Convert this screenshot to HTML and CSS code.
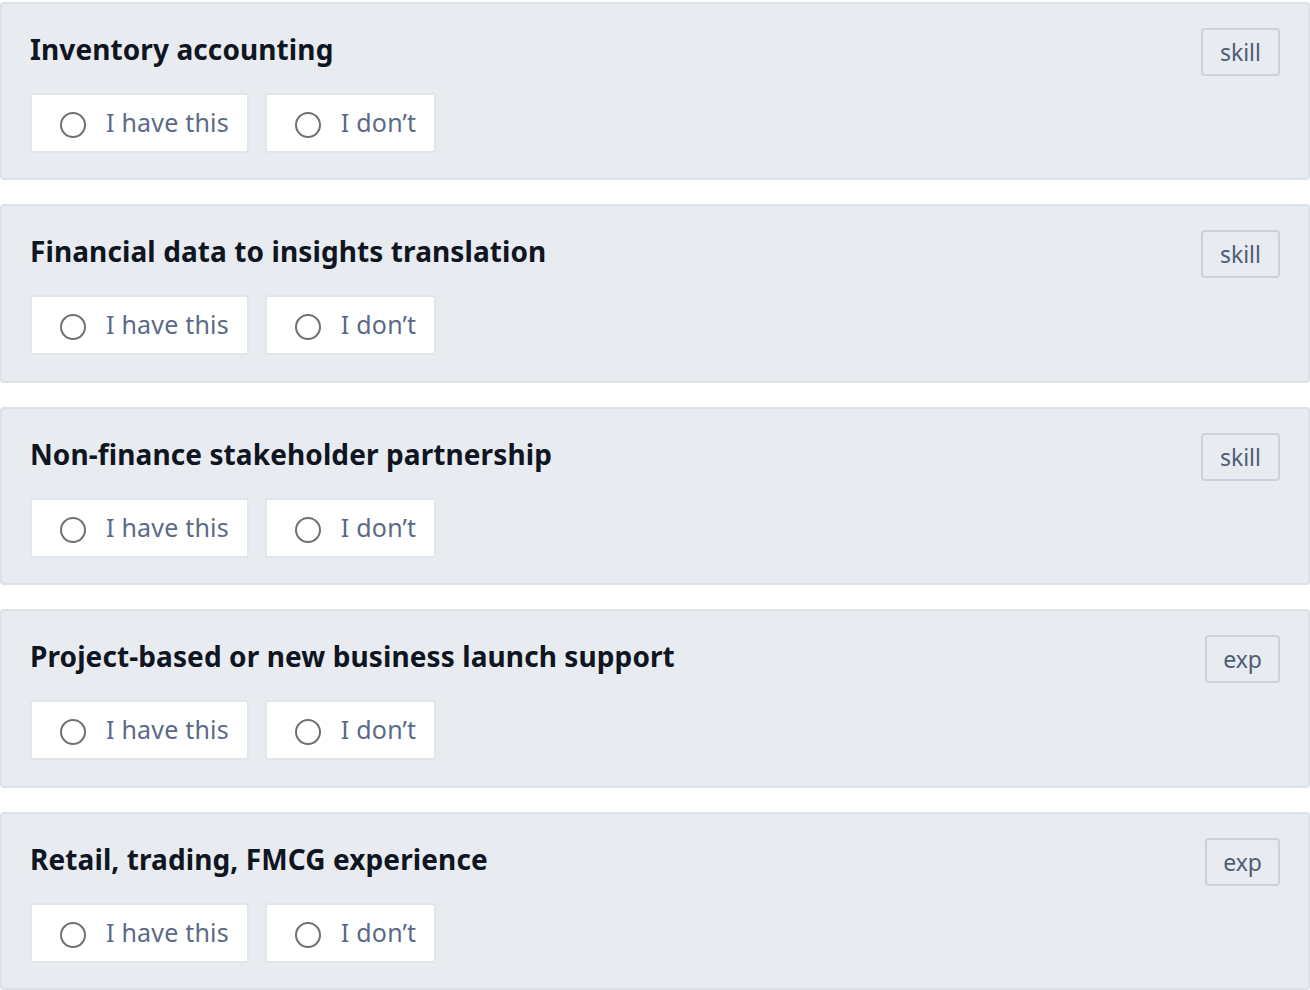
FILE: index.html
```html
<!DOCTYPE html>
<html>
<head>
<meta charset="utf-8">
<link rel="stylesheet" href="styles.css">
</head>
<body>
<div class="list">
  <div class="card">
    <div class="main">
      <h2 class="title">Inventory accounting</h2>
      <div class="options">
        <label class="opt"><span class="radio"></span><span class="label">I have this</span></label>
        <label class="opt"><span class="radio"></span><span class="label">I don’t</span></label>
      </div>
    </div>
    <span class="badge">skill</span>
  </div>
  <div class="card">
    <div class="main">
      <h2 class="title">Financial data to insights translation</h2>
      <div class="options">
        <label class="opt"><span class="radio"></span><span class="label">I have this</span></label>
        <label class="opt"><span class="radio"></span><span class="label">I don’t</span></label>
      </div>
    </div>
    <span class="badge">skill</span>
  </div>
  <div class="card">
    <div class="main">
      <h2 class="title">Non-finance stakeholder partnership</h2>
      <div class="options">
        <label class="opt"><span class="radio"></span><span class="label">I have this</span></label>
        <label class="opt"><span class="radio"></span><span class="label">I don’t</span></label>
      </div>
    </div>
    <span class="badge">skill</span>
  </div>
  <div class="card">
    <div class="main">
      <h2 class="title">Project-based or new business launch support</h2>
      <div class="options">
        <label class="opt"><span class="radio"></span><span class="label">I have this</span></label>
        <label class="opt"><span class="radio"></span><span class="label">I don’t</span></label>
      </div>
    </div>
    <span class="badge badge-exp">exp</span>
  </div>
  <div class="card">
    <div class="main">
      <h2 class="title">Retail, trading, FMCG experience</h2>
      <div class="options">
        <label class="opt"><span class="radio"></span><span class="label">I have this</span></label>
        <label class="opt"><span class="radio"></span><span class="label">I don’t</span></label>
      </div>
    </div>
    <span class="badge badge-exp">exp</span>
  </div>
</div>
</body>
</html>
```

FILE: styles.css
```css
html, body {
  margin: 0;
  padding: 0;
  background: #ffffff;
}
body {
  font-family: "Noto Sans", "Open Sans", sans-serif;
}
.list {
  display: flex;
  flex-direction: column;
  gap: 24px;
  padding-top: 2px;
}
.card {
  display: flex;
  justify-content: space-between;
  align-items: flex-start;
  background: #e8ebf0;
  border: 2px solid #dde1e8;
  border-radius: 4px;
  padding: 24px 28px 25.4px 28px;
}
.main {
  display: flex;
  flex-direction: column;
}
.title {
  margin: 0;
  padding-top: 1px;
  font-size: 28px;
  line-height: 41px;
  font-weight: 700;
  color: #0f1521;
  letter-spacing: 0.1px;
}
.options {
  display: flex;
  gap: 16px;
  margin-top: 23px;
}
.opt {
  display: flex;
  align-items: center;
  height: 56px;
  background: #ffffff;
  border: 2px solid #e2e5ea;
  border-radius: 3px;
  padding: 0 18px 0 28px;
  box-sizing: content-box;
}
.radio {
  width: 22px;
  height: 22px;
  border: 2px solid #707070;
  border-radius: 50%;
  margin-top: 4px;
  margin-right: 20px;
  flex: none;
}
.label {
  font-size: 25px;
  color: #5b6a86;
  line-height: 30px;
  letter-spacing: 0.2px;
  margin-top: -2px;
}
.badge {
  display: inline-block;
  border: 2px solid #cdd2da;
  border-radius: 4px;
  padding: 0 17px;
  height: 44px;
  line-height: 44px;
  font-size: 23px;
  color: #4f5d75;
}
.badge-exp {
  padding: 0 16px;
}
```
